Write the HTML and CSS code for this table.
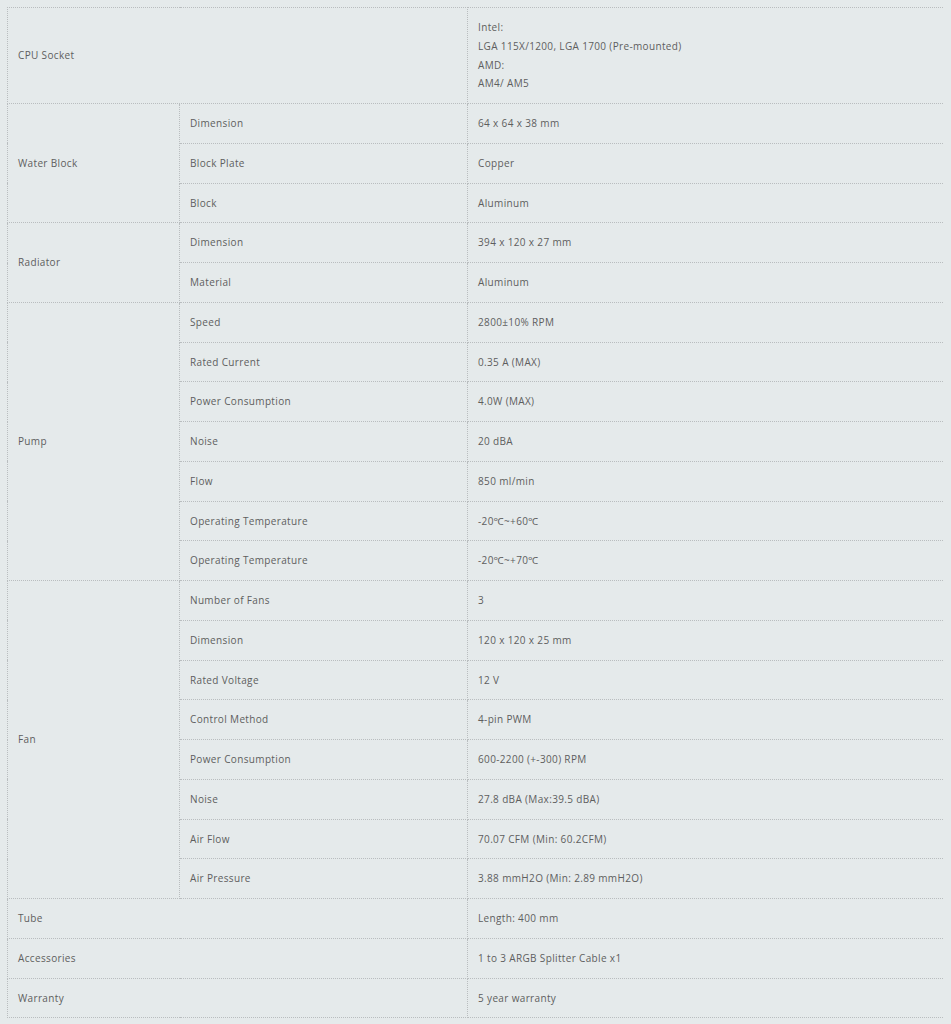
FILE: index.html
```html
<!DOCTYPE html>
<html>
<head>
<meta charset="utf-8">
<link rel="stylesheet" href="styles.css">
</head>
<body>
<table class="spec">
<colgroup><col class="c1"><col class="c2"><col class="c3"></colgroup>
<tbody>
<tr><td colspan="2">CPU Socket</td><td>Intel:<br>LGA 115X/1200, LGA 1700 (Pre-mounted)<br>AMD:<br>AM4/ AM5</td></tr>
<tr><td rowspan="3">Water Block</td><td>Dimension</td><td>64 x 64 x 38 mm</td></tr>
<tr><td>Block Plate</td><td>Copper</td></tr>
<tr><td>Block</td><td>Aluminum</td></tr>
<tr><td rowspan="2">Radiator</td><td>Dimension</td><td>394 x 120 x 27 mm</td></tr>
<tr><td>Material</td><td>Aluminum</td></tr>
<tr><td rowspan="7">Pump</td><td>Speed</td><td>2800±10% RPM</td></tr>
<tr><td>Rated Current</td><td>0.35 A (MAX)</td></tr>
<tr><td>Power Consumption</td><td>4.0W (MAX)</td></tr>
<tr><td>Noise</td><td>20 dBA</td></tr>
<tr><td>Flow</td><td>850 ml/min</td></tr>
<tr><td>Operating Temperature</td><td>-20℃~+60℃</td></tr>
<tr><td>Operating Temperature</td><td>-20℃~+70℃</td></tr>
<tr><td rowspan="8">Fan</td><td>Number of Fans</td><td>3</td></tr>
<tr><td>Dimension</td><td>120 x 120 x 25 mm</td></tr>
<tr><td>Rated Voltage</td><td>12 V</td></tr>
<tr><td>Control Method</td><td>4-pin PWM</td></tr>
<tr><td>Power Consumption</td><td>600-2200 (+-300) RPM</td></tr>
<tr><td>Noise</td><td>27.8 dBA (Max:39.5 dBA)</td></tr>
<tr><td>Air Flow</td><td>70.07 CFM (Min: 60.2CFM)</td></tr>
<tr><td>Air Pressure</td><td>3.88 mmH2O (Min: 2.89 mmH2O)</td></tr>
<tr><td colspan="2">Tube</td><td>Length: 400 mm</td></tr>
<tr><td colspan="2">Accessories</td><td>1 to 3 ARGB Splitter Cable x1</td></tr>
<tr><td colspan="2">Warranty</td><td>5 year warranty</td></tr>
</tbody>
</table>
</body>
</html>
```

FILE: styles.css
```css
html, body {
  background: #e5eaeb;
}
body {
  margin: 7px;
  font-family: "Open Sans", "Noto Sans", sans-serif;
  font-size: 10px;
  letter-spacing: 0.35px;
  color: #5e5e5e;
}
.spec {
  width: 937px;
  border-collapse: collapse;
  table-layout: fixed;
}
.c1 { width: 172px; }
.c2 { width: 288px; }
.c3 { width: 477px; }
.spec td {
  border: 1px dotted #b9bdbf;
  padding: 10px 10px 10px 10px;
  line-height: 18.75px;
  vertical-align: middle;
  text-align: left;
}
```
